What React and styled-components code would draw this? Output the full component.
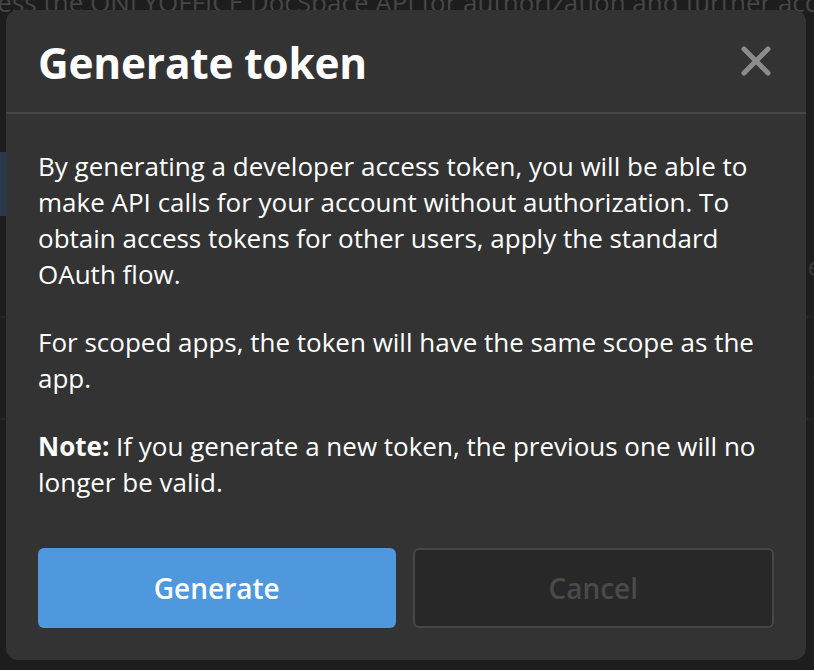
import styled, { createGlobalStyle } from "styled-components";

const GlobalStyle = createGlobalStyle`
  html, body {
    margin: 0;
    padding: 0;
    background: #262626;
    font-family: "Open Sans", "Noto Sans", sans-serif;
  }
`;

function CloseIcon() {
  return (
    <svg width="32" height="32" viewBox="0 0 32 32">
      <path
        d="M4 4 L28 28 M28 4 L4 28"
        stroke="#8c8c8c"
        strokeWidth="5"
        strokeLinecap="round"
      />
    </svg>
  );
}

function App() {
  return (
    <Page>
      <GlobalStyle />
      <Behind>
        <BehindText>
          Access the ONLYOFFICE DocSpace API for authorization and further access
        </BehindText>
        <BehindText>by</BehindText>
        <BehindTab />
        <BehindRow>e</BehindRow>
        <BehindRow>/</BehindRow>
      </Behind>
      <Overlay>
        <Dialog>
          <Header>
            <Title>Generate token</Title>
            <CloseButton>
              <CloseIcon />
            </CloseButton>
          </Header>
          <Body>
            <Paragraph>
              By generating a developer access token, you will be able to
              make API calls for your account without authorization. To
              obtain access tokens for other users, apply the standard
              OAuth flow.
            </Paragraph>
            <Paragraph>
              For scoped apps, the token will have the same scope as the
              app.
            </Paragraph>
            <Paragraph>
              <b>Note:</b> If you generate a new token, the previous one will no
              longer be valid.
            </Paragraph>
          </Body>
          <Footer>
            <Button $primary>Generate</Button>
            <Button disabled>Cancel</Button>
          </Footer>
        </Dialog>
      </Overlay>
    </Page>
  );
}

const Page = styled.div`
  position: relative;
  width: 814px;
  height: 670px;
  overflow: hidden;
  background: #262626;
`;

const Behind = styled.div`
  display: flex;
  flex-direction: column;
  margin-top: -16px;
  margin-left: -44px;
`;

const BehindText = styled.div`
  font-size: 26px;
  line-height: 36px;
  color: #6f6f6f;
  white-space: nowrap;
`;

const BehindTab = styled.div`
  margin-top: 96px;
  width: 50px;
  height: 64px;
  background: #3a5879;
`;

const BehindRow = styled.div`
  height: 100px;
  border-bottom: 2px solid #333;
  display: flex;
  align-items: center;
  justify-content: flex-end;
  margin-right: -8px;
  font-size: 26px;
  color: #555;
`;

const Overlay = styled.div`
  position: absolute;
  inset: 0;
  background: rgba(20, 20, 20, 0.45);
  padding: 10px 8px 10px 6px;
`;

const Dialog = styled.div`
  display: flex;
  flex-direction: column;
  width: 800px;
  height: 650px;
  box-sizing: border-box;
  background: #333333;
  border-radius: 12px;
`;

const Header = styled.div`
  display: flex;
  align-items: center;
  justify-content: space-between;
  height: 104px;
  padding: 2px 34px 0 32px;
  box-sizing: border-box;
  border-bottom: 2px solid #474747;
`;

const Title = styled.h1`
  margin: 0;
  font-size: 42.4px;
  font-weight: 700;
  color: #ffffff;
  letter-spacing: -0.2px;
`;

const CloseButton = styled.button`
  display: flex;
  padding: 0;
  margin-top: -2px;
  border: 0;
  background: none;
  cursor: pointer;
`;

const Body = styled.div`
  display: flex;
  flex-direction: column;
  gap: 32px;
  padding: 34px 30px 0 32px;
`;

const Paragraph = styled.p`
  margin: 0;
  font-size: 26px;
  line-height: 36px;
  color: #ffffff;

  b {
    font-weight: 700;
  }
`;

const Footer = styled.div`
  display: flex;
  gap: 17px;
  margin-top: auto;
  padding: 0 32px 32px 32px;
`;

const Button = styled.button`
  flex: 1;
  height: 80px;
  border-radius: 6px;
  font-family: "Open Sans", "Noto Sans", sans-serif;
  font-size: 28px;
  font-weight: 600;
  border: ${(p) => (p.$primary ? "none" : "2px solid #474747")};
  background: ${(p) => (p.$primary ? "#4f98dd" : "#282828")};
  color: ${(p) => (p.$primary ? "#ffffff" : "#4a4a4a")};
`;

export default App;
